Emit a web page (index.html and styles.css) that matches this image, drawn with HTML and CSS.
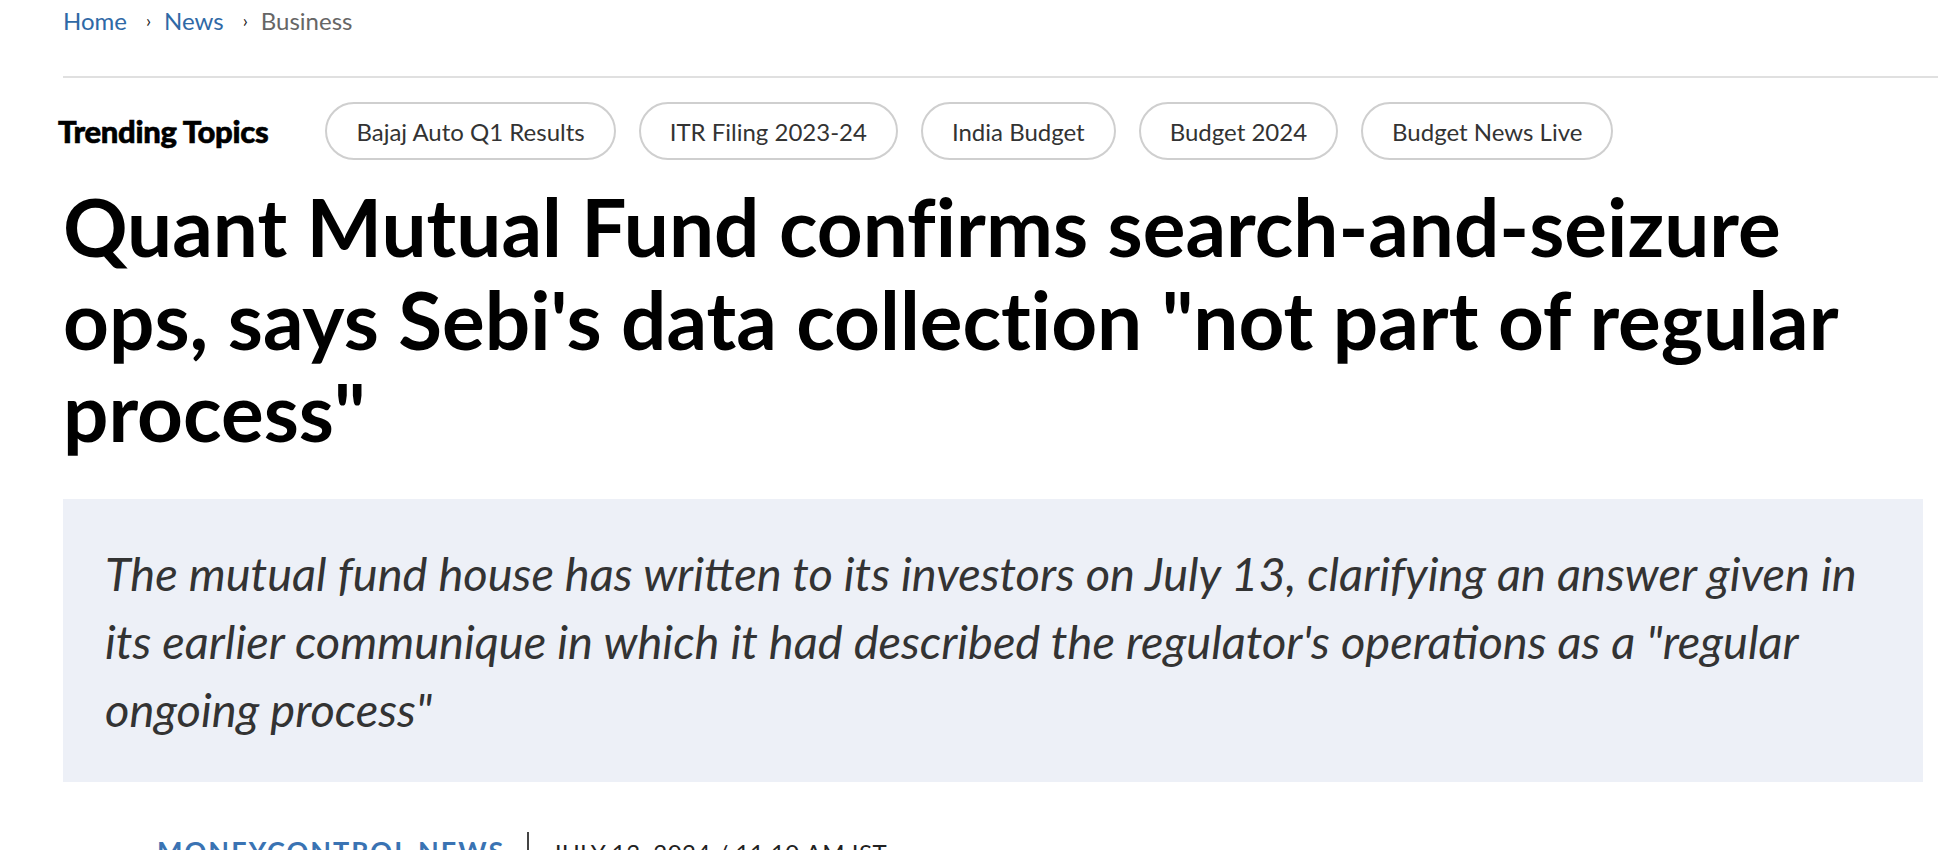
FILE: index.html
```html
<!DOCTYPE html>
<html lang="en">
<head>
<meta charset="utf-8">
<title>Quant Mutual Fund confirms search-and-seizure ops</title>
<link rel="stylesheet" href="styles.css">
</head>
<body>
<div class="page">
  <nav class="breadcrumb">
    <a class="crumb-link" href="#">Home</a>
    <span class="crumb-sep">›</span>
    <a class="crumb-link" href="#">News</a>
    <span class="crumb-sep">›</span>
    <span class="crumb-current">Business</span>
  </nav>
  <div class="rule"></div>
  <div class="trending">
    <span class="trending-title">Trending Topics</span>
    <a class="pill" href="#">Bajaj Auto Q1 Results</a>
    <a class="pill" href="#">ITR Filing 2023-24</a>
    <a class="pill" href="#">India Budget</a>
    <a class="pill" href="#">Budget 2024</a>
    <a class="pill" href="#">Budget News Live</a>
  </div>
  <h1 class="headline">Quant Mutual Fund confirms search-and-seizure ops, says Sebi's data collection "not part of regular process"</h1>
  <div class="summary">
    <p class="summary-text">The mutual fund house has written to its investors on July 13, clarifying an answer given in its earlier communique in which it had described the regulator's operations as a "regular ongoing process"</p>
  </div>
  <div class="byline">
    <a class="author" href="#">MONEYCONTROL NEWS</a>
    <span class="byline-divider"></span>
    <span class="date">JULY 13, 2024 / 11:10 AM IST</span>
  </div>
</div>
</body>
</html>
```

FILE: styles.css
```css
html, body {
  margin: 0;
  padding: 0;
  background: #ffffff;
}
body {
  font-family: Lato, "Open Sans", "Liberation Sans", sans-serif;
  color: #000;
  overflow: hidden;
}
.page {
  padding-left: 63px;
}
.breadcrumb {
  display: flex;
  align-items: center;
  padding-top: 6px;
  font-size: 24px;
  line-height: 29px;
  height: 29px;
}
.crumb-link {
  color: #2f69a6;
  text-decoration: none;
}
.crumb-sep {
  display: inline-block;
  color: #222;
  font-size: 18px;
  margin: 0 13px 0 19px;
}
.crumb-current {
  color: #666;
}
.rule {
  margin-top: 41px;
  height: 2px;
  background: #e0e0e0;
}
.trending {
  display: flex;
  align-items: center;
  gap: 23px;
  margin-top: 24px;
  margin-left: -5px;
}
.trending-title {
  font-weight: 900;
  font-size: 31px;
  letter-spacing: -0.3px;
  color: #000;
  -webkit-text-stroke: 0.6px #000;
  margin-right: 34px;
}
.pill {
  display: inline-flex;
  align-items: center;
  height: 58px;
  box-sizing: border-box;
  padding: 0 29px;
  border: 2px solid #cfcfcf;
  border-radius: 30px;
  font-size: 24px;
  color: #333;
  text-decoration: none;
}
.headline {
  margin: 20px 0 0 0;
  padding-right: 68px;
  font-size: 80px;
  line-height: 92.5px;
  font-weight: 700;
  color: #000;
  font-variant-ligatures: no-common-ligatures;
}
.summary {
  margin-top: 41px;
  margin-right: 15px;
  background: #edf0f7;
  padding: 40px 42px 39px 42px;
}
.summary-text {
  margin: 0;
  font-style: italic;
  font-size: 47px;
  line-height: 68px;
  color: #333;
}
.byline {
  display: flex;
  align-items: flex-start;
  margin-top: 50px;
  padding-left: 94px;
  height: 40px;
}
.author {
  color: #3a73b3;
  text-decoration: none;
  font-size: 27px;
  line-height: 32px;
  font-weight: 700;
  letter-spacing: 2px;
  margin-top: 3px;
}
.byline-divider {
  width: 2px;
  height: 40px;
  background: #444;
  margin: 0 22px 0 22px;
}
.date {
  font-size: 24px;
  line-height: 29px;
  color: #222;
  margin-top: 6px;
  letter-spacing: 0.5px;
}
```
